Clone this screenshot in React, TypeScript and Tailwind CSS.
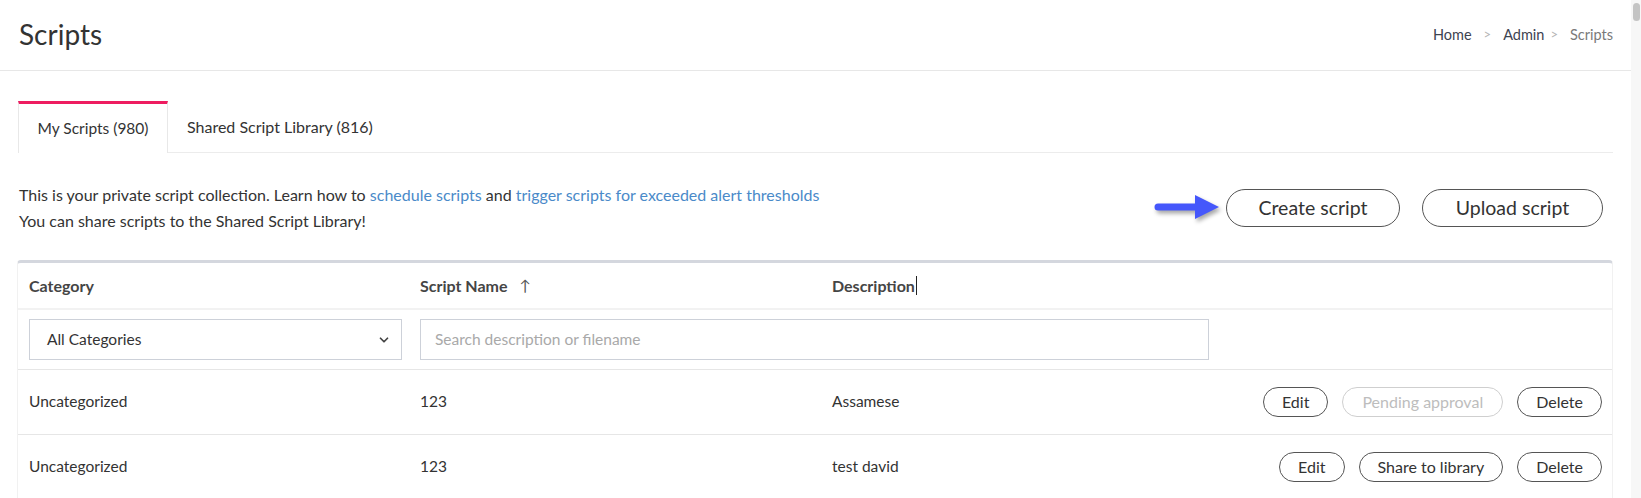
import { ChevronDown } from 'lucide-react';

const rows = [
  { category: 'Uncategorized', name: '123', description: 'Assamese', shared: true },
  { category: 'Uncategorized', name: '123', description: 'test david', shared: false },
];

function PillButton({ children, disabled = false }: { children: React.ReactNode; disabled?: boolean }) {
  return (
    <button
      className={
        disabled
          ? 'h-[30px] px-[19px] rounded-full border border-[#cfcfcf] text-[#bdbdbd] text-[16px] leading-none'
          : 'h-[30px] px-[18px] rounded-full border border-[#555] text-[#333] text-[16px] leading-none bg-white'
      }
    >
      {children}
    </button>
  );
}

function Arrow() {
  return (
    <svg width="70" height="32" viewBox="0 0 70 32" className="drop-shadow-[2px_3px_2px_rgba(0,0,0,0.35)]">
      <path d="M6 11.5 H43 V3 L67 15 L43 27 V18.5 H6 A3.5 3.5 0 0 1 6 11.5 Z" fill="#4557fb" />
    </svg>
  );
}

export default function App() {
  return (
    <div className="flex h-screen overflow-hidden bg-white font-['Lato',sans-serif] text-[#333]">
      <div className="flex-1 min-w-0">
        <header className="h-[71px] flex items-center justify-between pl-[19px] pr-[18px] border-b border-[#e7e7e7]">
          <h1 className="text-[28px] text-[#333] leading-none pb-[3px]">Scripts</h1>
          <nav className="flex items-center text-[14.5px] text-[#3d4351]">
            <span>Home</span>
            <span className="mx-[12px] text-[#b5b5b5] text-[13px]">&gt;</span>
            <span>Admin</span>
            <span className="ml-[6px] mr-[12px] text-[#b5b5b5] text-[13px]">&gt;</span>
            <span className="text-[#7a7a7a]">Scripts</span>
          </nav>
        </header>

        <div className="pl-[17px] pr-[18px]">
          <div className="flex mt-[30px]">
            <div className="w-[150px] h-[52px] ml-px border-t-[3px] border-t-[#ee1c60] border-x border-x-[#e8e8e8] flex items-center justify-center text-[15.5px] text-[#333]">
              My Scripts (980)
            </div>
            <div className="flex-1 border-b border-[#ececec] flex items-center pl-[19px] text-[16px] text-[#333]">
              Shared Script Library (816)
            </div>
          </div>

          <div className="flex items-center justify-between mt-[29px] pl-[2px] pr-[10px]">
            <div className="text-[16px] leading-[26px] text-[#333]">
              <p>
                This is your private script collection. Learn how to{' '}
                <a className="text-[#4a8ac9]">schedule scripts</a> and{' '}
                <a className="text-[#4a8ac9]">trigger scripts for exceeded alert thresholds</a>
              </p>
              <p>You can share scripts to the Shared Script Library!</p>
            </div>
            <div className="flex items-center">
              <Arrow />
              <button className="ml-[4px] w-[174px] h-[38px] rounded-full border border-[#555] text-[19.5px] text-[#333]">
                Create script
              </button>
              <button className="ml-[22px] w-[181px] h-[38px] rounded-full border border-[#555] text-[19.5px] text-[#333]">
                Upload script
              </button>
            </div>
          </div>

          <div className="mt-[26px] border-t-[3px] border-[#d4d7de] rounded-t-[4px] border-x border-x-[#f1f1f1]">
            <div className="grid grid-cols-[393px_412px_398px_1fr] h-[47px] items-center text-[16px] font-bold text-[#454545] border-b-2 border-[#f2f2f2]">
              <div className="pl-[11px]">Category</div>
              <div className="pl-[9px] flex items-center">
                Script Name
                <span className="ml-[12px] font-normal text-[#555] text-[15px]">&#8593;</span>
              </div>
              <div className="pl-[9px] flex items-center">
                Description
                <span className="ml-px w-px h-[19px] bg-[#222]" />
              </div>
              <div />
            </div>

            <div className="grid grid-cols-[393px_412px_398px_1fr] h-[60px] items-center border-b border-[#e6e6e6]">
              <div className="pl-[11px] pr-[9px]">
                <div className="h-[41px] border border-[#cdd1d9] flex items-center justify-between pl-[17px] pr-[10px] text-[15.5px] text-[#333]">
                  All Categories
                  <ChevronDown size={14} strokeWidth={3} className="text-[#444]" />
                </div>
              </div>
              <div className="col-span-2 pl-[9px] pr-[12px]">
                <div className="h-[41px] border border-[#cdd1d9] flex items-center pl-[14px] text-[15.5px] text-[#a9a9a9]">
                  Search description or filename
                </div>
              </div>
              <div />
            </div>

            {rows.map((row, i) => (
              <div
                key={i}
                className="grid grid-cols-[393px_412px_398px_1fr] h-[65px] items-center border-b border-[#e6e6e6] text-[15.5px] text-[#333]"
              >
                <div className="pl-[11px]">{row.category}</div>
                <div className="pl-[9px]">{row.name}</div>
                <div className="pl-[9px]">{row.description}</div>
                <div className="flex justify-end gap-[14px] pr-[10px]">
                  <PillButton>Edit</PillButton>
                  {row.shared ? (
                    <PillButton disabled>Pending approval</PillButton>
                  ) : (
                    <PillButton>Share to library</PillButton>
                  )}
                  <PillButton>Delete</PillButton>
                </div>
              </div>
            ))}
          </div>
        </div>
      </div>

      <div className="w-[10px] bg-[#f7f7f7] pt-[3px] flex justify-center">
        <div className="w-[7px] h-[18px] rounded-full bg-[#c4c4c4]" />
      </div>
    </div>
  );
}
